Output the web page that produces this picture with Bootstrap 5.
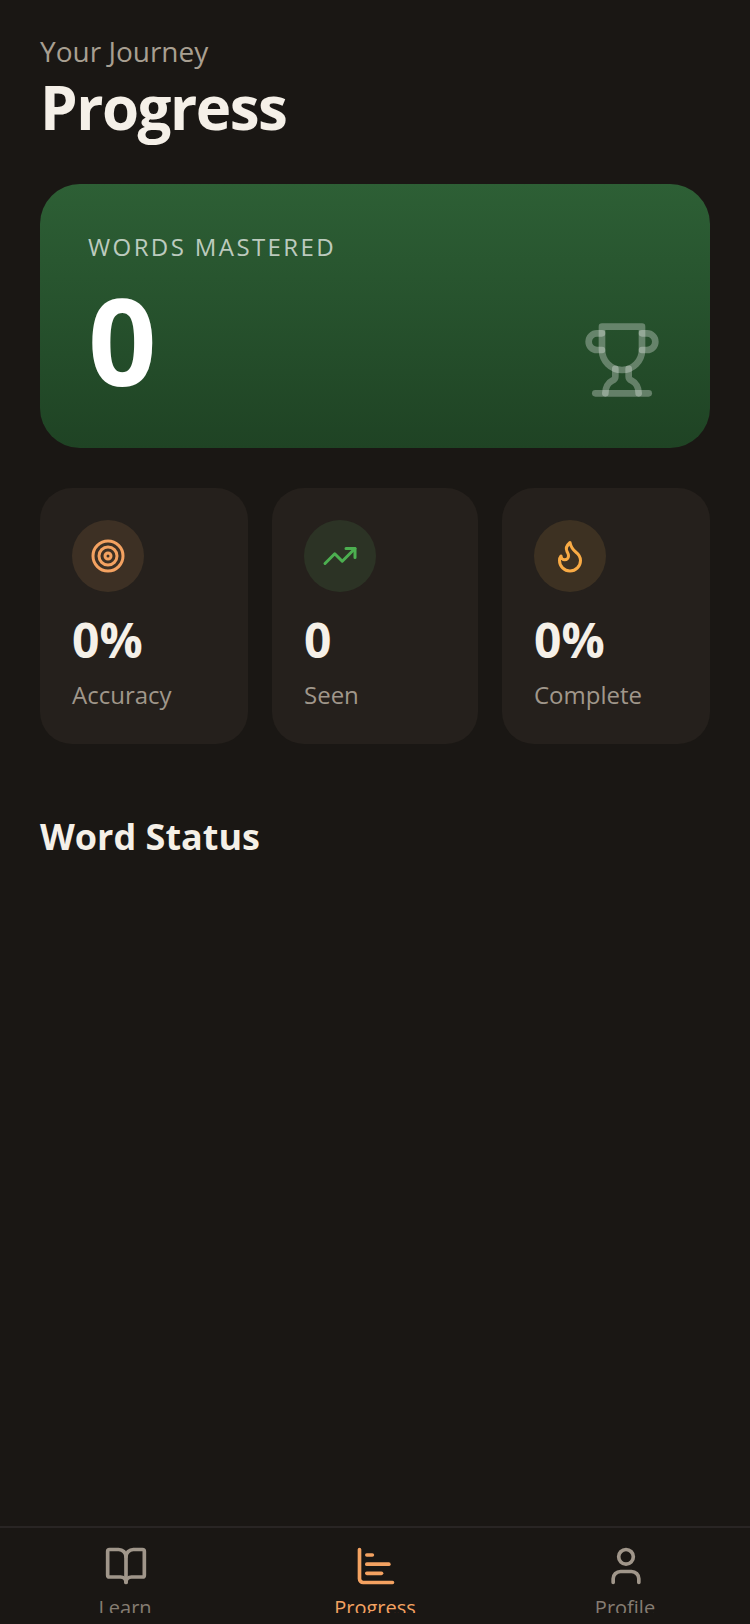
<!DOCTYPE html>
<html lang="en">
<head>
  <meta charset="UTF-8" />
  <meta name="viewport" content="width=device-width, initial-scale=1.0"/>
  <title>Progress</title>
  <link href="https://cdn.jsdelivr.net/npm/bootstrap@5.3.3/dist/css/bootstrap.min.css" rel="stylesheet">
  <style>
    body {
      background: #1a1714;
      font-family: "Open Sans", sans-serif;
      color: #f5f0e8;
      height: 1624px;
      overflow: hidden;
    }
    .app-shell { height: 1624px; }
    .page-main { padding: 31px 40px 0; }
    .eyebrow { font-size: 28px; line-height: 40px; color: #a89f91; }
    .page-title { font-size: 60px; line-height: 72px; font-weight: 700; letter-spacing: -1.5px; margin: 0; }

    .hero-panel {
      height: 264px;
      margin-top: 41px;
      padding: 47px 48px 0;
      border-radius: 40px;
      background: linear-gradient(180deg, #2d5f35 0%, #1f4324 100%);
    }
    .hero-label { font-size: 24px; line-height: 32px; letter-spacing: 2.4px; color: rgba(255,255,255,.7); }
    .hero-count { font-size: 120px; line-height: 136px; font-weight: 700; color: #fff; margin-top: 9px; }
    .hero-icon {
      position: absolute; right: 48px; bottom: 48px;
      width: 80px; height: 80px;
      fill: none; stroke: rgba(255,255,255,.3);
      stroke-width: 2; stroke-linecap: round; stroke-linejoin: round;
    }

    .stat-grid { display: grid; grid-template-columns: 1fr 206px 1fr; gap: 24px; margin-top: 40px; }
    .stat-box { height: 256px; padding: 32px; border-radius: 32px; background: #25201c; }
    .stat-disc { width: 72px; height: 72px; }
    .stat-disc svg { width: 36px; height: 36px; fill: none; stroke: currentColor; stroke-width: 2; stroke-linecap: round; stroke-linejoin: round; }
    .disc-orange { background: #3d3024; color: #f4a261; }
    .disc-green { background: #2c3325; color: #4caf50; }
    .disc-amber { background: #3d3122; color: #f9ab45; }
    .stat-num { font-size: 48px; line-height: 56px; font-weight: 700; margin-top: 20px; }
    .stat-name { font-size: 24px; line-height: 32px; color: #a0978b; margin-top: 11px; }

    .section-title { font-size: 36px; line-height: 48px; font-weight: 700; margin: 69px 0 0; }

    .tab-bar { border-top: 2px solid #292524; height: 98px; }
    .tab-item { height: 85px; padding-top: 16px; overflow: hidden; color: #a0968a; font-size: 20px; line-height: 28px; }
    .tab-item svg { width: 44px; height: 44px; flex-shrink: 0; fill: none; stroke: currentColor; stroke-width: 2; stroke-linecap: round; stroke-linejoin: round; margin: 0 0 6px 2px; }
    .tab-active { color: #f4a261; }
    .tab-text { opacity: .8; flex-shrink: 0; }
    .tab-active .tab-text { opacity: 1; }
  </style>
</head>
<body>

<div class="app-shell d-flex flex-column">
  <main class="page-main flex-grow-1">
    <div class="eyebrow">Your Journey</div>
    <h1 class="page-title">Progress</h1>

    <div class="hero-panel position-relative">
      <div class="hero-label">WORDS MASTERED</div>
      <div class="hero-count">0</div>
      <svg class="hero-icon" viewBox="0 0 24 24">
        <path d="M6 9H4.5a2.5 2.5 0 0 1 0-5H6"/>
        <path d="M18 9h1.5a2.5 2.5 0 0 0 0-5H18"/>
        <path d="M4 22h16"/>
        <path d="M10 14.66V17c0 .55-.47.98-.97 1.21C7.85 18.75 7 20.24 7 22"/>
        <path d="M14 14.66V17c0 .55.47.98.97 1.21C16.15 18.75 17 20.24 17 22"/>
        <path d="M18 2H6v7a6 6 0 0 0 12 0V2Z"/>
      </svg>
    </div>

    <div class="stat-grid">
      <div class="stat-box">
        <div class="stat-disc disc-orange rounded-circle d-flex align-items-center justify-content-center">
          <svg viewBox="0 0 24 24"><circle cx="12" cy="12" r="10"/><circle cx="12" cy="12" r="6"/><circle cx="12" cy="12" r="2"/></svg>
        </div>
        <div class="stat-num">0%</div>
        <div class="stat-name">Accuracy</div>
      </div>
      <div class="stat-box">
        <div class="stat-disc disc-green rounded-circle d-flex align-items-center justify-content-center">
          <svg viewBox="0 0 24 24"><polyline points="22 7 13.5 15.5 8.5 10.5 2 17"/><polyline points="16 7 22 7 22 13"/></svg>
        </div>
        <div class="stat-num">0</div>
        <div class="stat-name">Seen</div>
      </div>
      <div class="stat-box">
        <div class="stat-disc disc-amber rounded-circle d-flex align-items-center justify-content-center">
          <svg viewBox="0 0 24 24"><path d="M8.5 14.5A2.5 2.5 0 0 0 11 12c0-1.38-.5-2-1-3-1.072-2.143-.224-4.054 2-6 .5 2.5 2 4.9 4 6.5 2 1.6 3 3.5 3 5.5a7 7 0 1 1-14 0c0-1.153.433-2.294 1-3a2.5 2.5 0 0 0 2.5 2.5z"/></svg>
        </div>
        <div class="stat-num">0%</div>
        <div class="stat-name">Complete</div>
      </div>
    </div>

    <h2 class="section-title">Word Status</h2>
  </main>

  <nav class="tab-bar row g-0 flex-shrink-0">
    <div class="col-4 tab-item d-flex flex-column align-items-center">
      <svg viewBox="0 0 24 24"><path d="M12 7v14"/><path d="M3 18a1 1 0 0 1-1-1V4a1 1 0 0 1 1-1h5a4 4 0 0 1 4 4 4 4 0 0 1 4-4h5a1 1 0 0 1 1 1v13a1 1 0 0 1-1 1h-6a3 3 0 0 0-3 3 3 3 0 0 0-3-3z"/></svg>
      <span class="tab-text">Learn</span>
    </div>
    <div class="col-4 tab-item tab-active d-flex flex-column align-items-center">
      <svg viewBox="0 0 24 24"><path d="M3 3v16a2 2 0 0 0 2 2h16"/><path d="M7 16h8"/><path d="M7 11h12"/><path d="M7 6h3"/></svg>
      <span class="tab-text">Progress</span>
    </div>
    <div class="col-4 tab-item d-flex flex-column align-items-center">
      <svg viewBox="0 0 24 24"><path d="M19 21v-2a4 4 0 0 0-4-4H9a4 4 0 0 0-4 4v2"/><circle cx="12" cy="7" r="4"/></svg>
      <span class="tab-text">Profile</span>
    </div>
  </nav>
</div>

<script src="https://cdn.jsdelivr.net/npm/bootstrap@5.3.3/dist/js/bootstrap.bundle.min.js"></script>
</body>
</html>
